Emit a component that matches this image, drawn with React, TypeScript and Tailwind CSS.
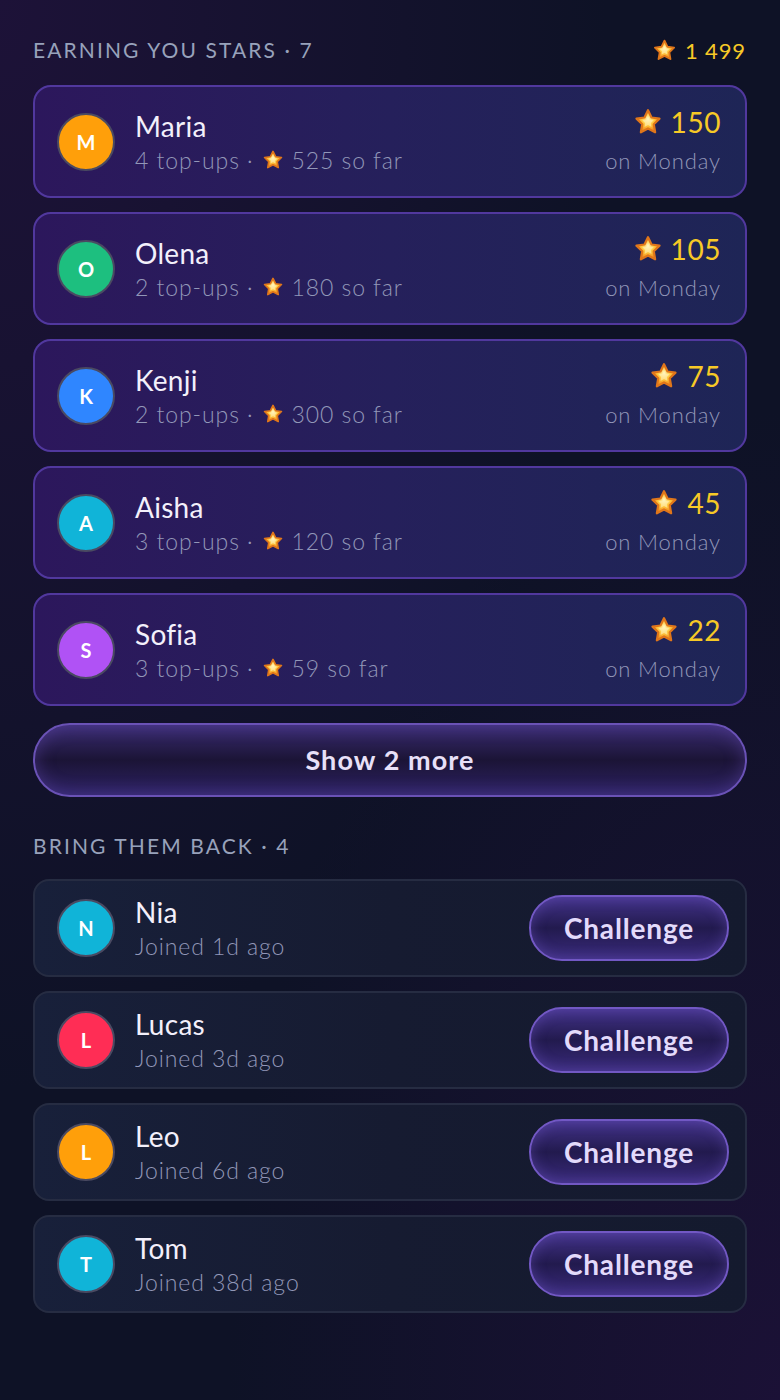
import { useId } from "react";

type Earner = { name: string; color: string; topUps: number; soFar: number; stars: number };
type Lapsed = { name: string; color: string; joined: string };

const earners: Earner[] = [
  { name: "Maria", color: "bg-[#ff9f0a]", topUps: 4, soFar: 525, stars: 150 },
  { name: "Olena", color: "bg-[#1dbf7f]", topUps: 2, soFar: 180, stars: 105 },
  { name: "Kenji", color: "bg-[#2f86ff]", topUps: 2, soFar: 300, stars: 75 },
  { name: "Aisha", color: "bg-[#10b4d8]", topUps: 3, soFar: 120, stars: 45 },
  { name: "Sofia", color: "bg-[#b052f5]", topUps: 3, soFar: 59, stars: 22 },
];

const lapsed: Lapsed[] = [
  { name: "Nia", color: "bg-[#10b4d8]", joined: "1d" },
  { name: "Lucas", color: "bg-[#ff2d55]", joined: "3d" },
  { name: "Leo", color: "bg-[#ff9f0a]", joined: "6d" },
  { name: "Tom", color: "bg-[#10b4d8]", joined: "38d" },
];

const font = { fontFamily: "Lato, 'Noto Sans', sans-serif" };

function Star({ size = 22 }: { size?: number }) {
  const id = useId();
  return (
    <svg width={size} height={size} viewBox="0 0 24 24" className="shrink-0">
      <defs>
        <radialGradient id={`g${id}`} cx="50%" cy="40%" r="60%">
          <stop offset="0%" stopColor="#fff3b0" />
          <stop offset="45%" stopColor="#ffc93d" />
          <stop offset="100%" stopColor="#f08418" />
        </radialGradient>
      </defs>
      <path
        d="M12 2.6l2.8 5.8 6.4.9-4.6 4.5 1.1 6.4L12 17.2l-5.7 3 1.1-6.4-4.6-4.5 6.4-.9z"
        fill={`url(#g${id})`}
        stroke="#e0761a"
        strokeWidth="1.8"
        strokeLinejoin="round"
      />
      <path
        d="M12 7.2l1.4 2.9 3.2.4-2.3 2.2.5 3.2L12 14.4l-2.8 1.5.5-3.2-2.3-2.2 3.2-.4z"
        fill="#fff6c8"
        opacity="0.55"
        strokeLinejoin="round"
      />
    </svg>
  );
}

function Avatar({ name, color }: { name: string; color: string }) {
  return (
    <div
      className={`flex h-[58px] w-[58px] shrink-0 items-center justify-center rounded-full border-2 border-[#4a4a62] ${color} text-[20px] font-bold text-white`}
    >
      {name[0]}
    </div>
  );
}

function SectionTitle({ children }: { children: React.ReactNode }) {
  return <h2 className="text-[21px] tracking-[0.1em] text-[#98a2bb]">{children}</h2>;
}

export default function App() {
  return (
    <div
      style={font}
      className="min-h-[1400px] w-full bg-[#0e1226] bg-[radial-gradient(ellipse_at_0%_0%,#1d1238_0%,transparent_55%),radial-gradient(ellipse_at_100%_100%,#1b1136_0%,transparent_50%)] px-[33px] pt-[36px]"
    >
      <div className="flex h-[28px] items-center justify-between">
        <SectionTitle>EARNING YOU STARS · 7</SectionTitle>
        <div className="flex items-center gap-[8px] pr-[1px] text-[22px] tracking-[0.04em] text-[#f7c926]">
          <Star size={25} />
          <span>1 499</span>
        </div>
      </div>

      <div className="mt-[21px] flex flex-col gap-[14px]">
        {earners.map((e) => (
          <div
            key={e.name}
            className="flex h-[113px] items-center rounded-[18px] border-2 border-[#51389e] bg-gradient-to-r from-[#2c175c] via-[#25205b] to-[#1e2556] pl-[22px] pr-[24px]"
          >
            <Avatar name={e.name} color={e.color} />
            <div className="ml-[20px] flex flex-1 flex-col">
              <span className="text-[28px] leading-[34px] tracking-[0.01em] text-[#f3f0fb]">{e.name}</span>
              <span className="mt-[2px] flex items-center gap-[8px] text-[23px] font-light leading-[30px] tracking-[0.04em] text-[#9297b8]">
                <span>{e.topUps} top-ups ·</span>
                <Star size={22} />
                <span>{e.soFar} so far</span>
              </span>
            </div>
            <div className="flex flex-col items-end">
              <span className="-mt-[4px] flex items-center gap-[8px] text-[28px] leading-[34px] tracking-[0.02em] text-[#f7c926]">
                <Star size={30} />
                {e.stars}
              </span>
              <span className="mt-[8px] text-[22px] font-light leading-[28px] tracking-[0.04em] text-[#9297b8]">on Monday</span>
            </div>
          </div>
        ))}
      </div>

      <button className="mt-[17px] flex h-[74px] w-full items-center justify-center rounded-full border-2 border-[#6a52b6] bg-gradient-to-b from-[#3a2c72] via-[#1b1436] to-[#2d2264] text-[27px] font-bold tracking-[0.04em] text-[#e8e0f8] shadow-[inset_0_0_18px_rgba(120,90,210,0.35)]">
        Show 2 more
      </button>

      <div className="mt-[35px] flex h-[28px] items-center">
        <SectionTitle>BRING THEM BACK · 4</SectionTitle>
      </div>

      <div className="mt-[19px] flex flex-col gap-[14px]">
        {lapsed.map((l) => (
          <div
            key={l.name}
            className="flex h-[98px] items-center rounded-[16px] border-2 border-[#262c42] bg-gradient-to-r from-[#18203a] via-[#161b31] to-[#141a2e] pl-[22px] pr-[16px]"
          >
            <Avatar name={l.name} color={l.color} />
            <div className="ml-[20px] flex flex-1 flex-col">
              <span className="text-[28px] leading-[34px] tracking-[0.01em] text-[#f3f0fb]">{l.name}</span>
              <span className="mt-[2px] text-[23px] font-light leading-[30px] tracking-[0.04em] text-[#9297b8]">Joined {l.joined} ago</span>
            </div>
            <button className="flex h-[66px] w-[200px] items-center justify-center rounded-full border-2 border-[#7258c4] bg-gradient-to-b from-[#43338a] via-[#221a4e] to-[#3a2b7c] text-[28px] font-bold tracking-[0.03em] text-[#e3dafb] shadow-[inset_0_0_14px_rgba(130,100,220,0.35)]">
              Challenge
            </button>
          </div>
        ))}
      </div>
    </div>
  );
}
